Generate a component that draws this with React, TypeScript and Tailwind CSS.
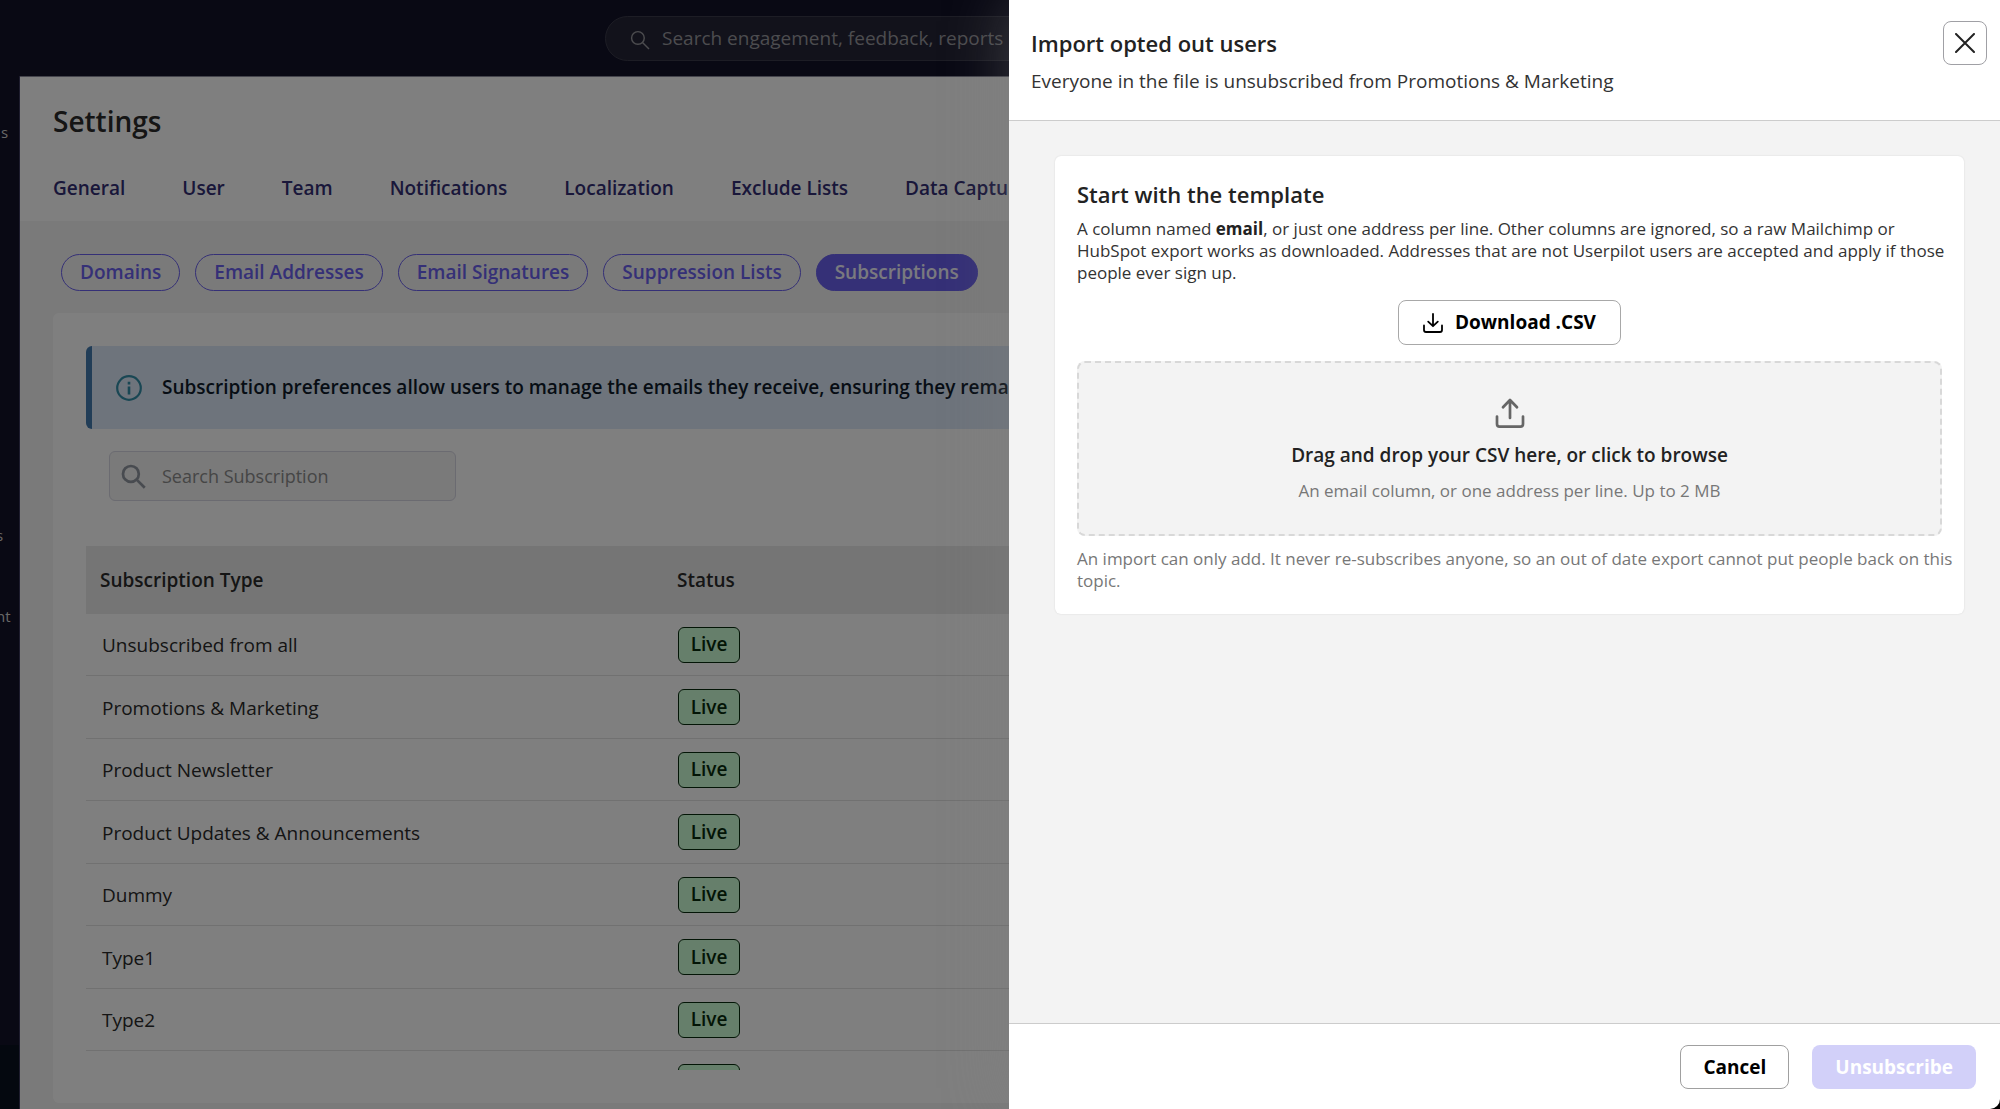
import React from "react";

const tabs = ["General", "User", "Team", "Notifications", "Localization", "Exclude Lists", "Data Capture"];
const pills = ["Domains", "Email Addresses", "Email Signatures", "Suppression Lists", "Subscriptions"];
const rows = [
  "Unsubscribed from all",
  "Promotions & Marketing",
  "Product Newsletter",
  "Product Updates & Announcements",
  "Dummy",
  "Type1",
  "Type2",
  "",
];

function SearchIcon({ className, weight }: { className: string; weight: number }) {
  return (
    <svg viewBox="0 0 24 24" className={className} fill="none" stroke="currentColor" strokeWidth={weight} aria-hidden="true">
      <circle cx="9.5" cy="9.5" r="7.6" />
      <path d="M15 15l7.8 7.8" />
    </svg>
  );
}

function DownloadIcon() {
  return (
    <svg viewBox="0 0 20 20" className="size-5" fill="none" stroke="currentColor" strokeWidth="1.8" strokeLinecap="round" strokeLinejoin="round" aria-hidden="true">
      <path d="M10 .9v12M5.2 8.700l4.800 4.500 4.800-4.500" />
      <path d="M1 12.500v4.500a2 2 0 0 0 2 2h14a2 2 0 0 0 2-2v-4.500" />
    </svg>
  );
}

function UploadIcon() {
  return (
    <svg viewBox="0 0 30 30" className="size-[30px]" fill="none" stroke="currentColor" strokeWidth="2.700" strokeLinecap="round" strokeLinejoin="round" aria-hidden="true">
      <path d="M15 20V2M8 9.300l7-7.300 7 7.300" />
      <path d="M2 18.500v7.500a2.600 2.600 0 0 0 2.600 2.600h20.800a2.600 2.600 0 0 0 2.600-2.600v-7.500" />
    </svg>
  );
}

function SettingsPage() {
  return (
    <div className="flex h-full flex-col bg-[#121228]">
      <header className="flex h-[76px] shrink-0 items-center justify-center">
        <label className="flex h-[45px] w-[790px] items-center gap-3 rounded-full border border-[#3a3a4a] bg-[#252536] pl-6 text-[#98989e]">
          <SearchIcon className="mt-1 size-5 shrink-0" weight={1.7} />
          <span className="sr-only">Search</span>
          <input
            className="w-full bg-transparent text-[19px] outline-none placeholder:text-[#98989e]"
            placeholder="Search engagement, feedback, reports"
          />
        </label>
      </header>
      <div className="flex min-h-0 flex-1">
        <nav className="flex w-5 shrink-0 flex-col overflow-hidden border-r border-[#3c3a5c] text-[15px] leading-5 text-[#d0d0d0]">
          <a href="#s1" className="mt-[46px] block pl-px">s</a>
          <a href="#s2" className="mt-[383px] block -indent-1">s</a>
          <a href="#s3" className="mt-[61px] block -indent-1">nt</a>
          <div className="mt-auto h-16 bg-[#08101e]" />
        </nav>
        <main className="flex min-w-0 flex-1 flex-col border-t border-[#8a8a9a] bg-[#f4f4f4]">
          <div className="h-36 shrink-0 bg-white px-[33px] pt-6">
            <h1 className="text-[28px] leading-10 font-semibold text-[#2a2a2a]">Settings</h1>
            <nav className="mt-[33px] flex gap-[57px] text-[19px] leading-7 font-semibold whitespace-nowrap text-[#332e74]">
              {tabs.map((t) => (
                <a key={t} href={"#" + t}>{t}</a>
              ))}
            </nav>
          </div>
          <div className="flex shrink-0 gap-[15px] px-[41px] pt-[33px] pb-[22px]">
            {pills.map((p) => (
              <button
                key={p}
                className={
                  "flex h-[37px] items-center rounded-full border border-[#6a60ee] px-[18px] text-[19px] font-semibold whitespace-nowrap " +
                  (p === "Subscriptions" ? "bg-[#6a60ee] text-[#f4f4ff]" : "text-[#6a60ee]")
                }
              >
                {p}
              </button>
            ))}
          </div>
          <section className="mb-1.5 ml-[33px] flex min-h-0 flex-1 flex-col rounded-l-md bg-white pt-[33px] pb-[33px] pl-[33px]">
            <div className="flex h-[83px] shrink-0 items-center overflow-hidden rounded-l-md border-l-6 border-[#437aae] bg-[#dce9f8] pl-6 whitespace-nowrap">
              <svg viewBox="0 0 26 26" className="size-[26px] shrink-0 text-[#338ea8]" fill="none" stroke="currentColor" strokeWidth="2.2" aria-hidden="true">
                <circle cx="13" cy="13" r="11.8" />
                <path d="M13 11.500v8M13 6.800v2.600" strokeWidth="2.600" />
              </svg>
              <p className="ml-5 text-[19px] font-semibold text-[#0f1a2a]">
                Subscription preferences allow users to manage the emails they receive, ensuring they remain
              </p>
            </div>
            <label className="mt-[22px] ml-[23px] flex h-[50px] w-[347px] shrink-0 items-center gap-4 rounded-md border border-[#d6d6e2] bg-[#f4f4f4] pl-[11px] text-[#9096a0]">
              <SearchIcon className="size-[25px] shrink-0" weight={2.6} />
              <span className="sr-only">Search subscription</span>
              <input className="w-full bg-transparent text-[18px] outline-none placeholder:text-[#8c8c8c]" placeholder="Search Subscription" />
            </label>
            <div className="mt-[45px] min-h-0 flex-1 overflow-hidden">
              <table className="w-full table-fixed border-separate border-spacing-0 text-left text-[19px] text-[#2a2a2a]">
                <thead>
                  <tr className="h-[68px] bg-[#ebebeb]">
                    <th className="w-[577px] pl-3.5 font-semibold">Subscription Type</th>
                    <th className="pl-3.5 font-semibold">Status</th>
                  </tr>
                </thead>
                <tbody>
                  {rows.map((r, i) => (
                    <tr key={i} className="odd:h-[62px] even:h-[63px]">
                      <td className="border-b border-[#e2e2e2] pt-0.5 pl-4">{r}</td>
                      <td className="border-b border-[#e2e2e2] pl-[15px]">
                        <span className="flex h-9 w-[62px] items-center justify-center rounded-md border border-[#062a0c] bg-[#ccffd6] font-semibold text-[#062a0c]">
                          Live
                        </span>
                      </td>
                    </tr>
                  ))}
                </tbody>
              </table>
            </div>
          </section>
        </main>
      </div>
    </div>
  );
}

function ImportDrawer() {
  return (
    <div className="absolute inset-y-0 right-0 w-[49.55%] bg-black shadow-[0_0_60px_rgba(128,128,128,0.4)]">
      <aside role="dialog" aria-labelledby="drawer-title" className="flex h-full flex-col overflow-hidden rounded-br-[10px] bg-white text-[#222]">
        <header className="flex h-[121px] shrink-0 items-start justify-between border-b border-[#ccc] pt-[21px] pr-[13px] pl-[22px]">
          <div>
            <h2 id="drawer-title" className="pt-1.5 text-[22px] leading-8 font-semibold">Import opted out users</h2>
            <p className="mt-2 text-[19px] leading-7 text-[#333]">Everyone in the file is unsubscribed from Promotions &amp; Marketing</p>
          </div>
          <button aria-label="Close" className="flex size-11 items-center justify-center rounded-lg border border-[#a0a0a5]">
            <svg viewBox="0 0 20 20" className="size-5" fill="none" stroke="currentColor" strokeWidth="2" strokeLinecap="round" aria-hidden="true">
              <path d="M1 1l18 18M19 1L1 19" />
            </svg>
          </button>
        </header>
        <div className="min-h-0 flex-1 bg-[#f3f3f3] pt-[35px] pr-9 pl-[46px]">
          <section className="rounded-md bg-white px-[22px] pt-[22px] pb-[22px] shadow-[0_0_2px_rgba(0,0,0,0.12)]">
            <h3 className="text-[22px] leading-8 font-semibold">Start with the template</h3>
            <p className="mt-2 -mr-4 text-[17px] leading-[22px] text-[#333]">
              A column named <strong className="font-bold text-[#222]">email</strong>, or just one address per line. Other columns are ignored, so a raw Mailchimp or
              HubSpot export works as downloaded. Addresses that are not Userpilot users are accepted and apply if those people ever sign up.
            </p>
            <button className="mx-auto mt-4 flex h-[45px] items-center gap-3 rounded-lg border border-[#a8a8a8] px-6 text-[19px] font-bold text-black">
              <DownloadIcon />
              Download .CSV
            </button>
            <label className="mt-4 flex h-[175px] flex-col items-center rounded-lg border-2 border-dashed border-[#d8d8d8] bg-[#f3f3f3] pt-[35px]">
              <input type="file" accept=".csv" className="sr-only" />
              <span className="text-[#666]"><UploadIcon /></span>
              <span className="mt-[13px] text-[19px] leading-7 font-semibold">Drag and drop your CSV here, or click to browse</span>
              <span className="mt-[11px] text-[17px] leading-[22px] text-[#777]">An email column, or one address per line. Up to 2 MB</span>
            </label>
            <p className="mt-3 -mr-4 text-[17px] leading-[22px] text-[#777]">
              An import can only add. It never re-subscribes anyone, so an out of date export cannot put people back on this topic.
            </p>
          </section>
        </div>
        <footer className="flex h-[86px] shrink-0 items-start justify-end gap-[23px] border-t border-[#ccc] pt-[21px] pr-6 text-[19px] font-bold">
          <button className="h-11 rounded-lg border border-[#a0a0a0] px-[22px] text-black">Cancel</button>
          <button disabled className="h-11 rounded-lg bg-[#d2d0f9] px-[23px] text-white">Unsubscribe</button>
        </footer>
      </aside>
    </div>
  );
}

export default function App() {
  return (
    <div className="relative h-screen overflow-hidden font-['Open_Sans',sans-serif]">
      <SettingsPage />
      <div className="absolute inset-0 bg-black/50" />
      <ImportDrawer />
    </div>
  );
}
